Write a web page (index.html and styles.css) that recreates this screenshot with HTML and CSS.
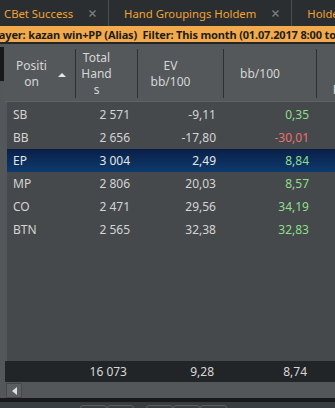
FILE: index.html
```html
<!DOCTYPE html>
<html lang="en">
<head>
    <meta charset="UTF-8">
    <title>Position Stats</title>
    <link rel="stylesheet" href="styles.css">
</head>
<body>

    <div class="tabs">
        <div class="tab first">
            <span class="tab-title">CBet Success</span>
            <svg class="tab-close" width="7" height="7" viewBox="0 0 7 7"><path d="M0.5 0.5L6.5 6.5M6.5 0.5L0.5 6.5"/></svg>
        </div>
        <div class="tab">
            <span class="tab-title">Hand Groupings Holdem</span>
            <svg class="tab-close" width="7" height="7" viewBox="0 0 7 7"><path d="M0.5 0.5L6.5 6.5M6.5 0.5L0.5 6.5"/></svg>
        </div>
        <div class="tab">
            <span class="tab-title">Holdem Hands</span>
        </div>
    </div>

    <div class="filter">
        <span class="filter-text">Player: kazan win+PP (Alias)&nbsp; Filter: This month (01.07.2017 8:00 to 01.08.2017 8:00)</span>
    </div>

    <div class="grid">
        <div class="head">
            <div class="hcell sorted"><span class="label">Positi<br>on</span><span class="arrow"></span></div>
            <div class="hcell"><span class="label">Total<br>Hand<br>s</span></div>
            <div class="hcell"><span class="label">EV<br>bb/100</span></div>
            <div class="hcell"><span class="label">bb/100</span></div>
            <div class="hcell wide"><span class="label">All<br>Preflop</span></div>
        </div>

        <div class="rows">
            <div class="row"><span>SB</span><span class="num">2&nbsp;571</span><span class="num">-9,11</span><span class="num pos">0,35</span></div>
            <div class="row"><span>BB</span><span class="num">2&nbsp;656</span><span class="num">-17,80</span><span class="num neg">-30,01</span></div>
            <div class="row selected"><span>EP</span><span class="num">3&nbsp;004</span><span class="num">2,49</span><span class="num pos">8,84</span></div>
            <div class="row"><span>MP</span><span class="num">2&nbsp;806</span><span class="num">20,03</span><span class="num pos">8,57</span></div>
            <div class="row"><span>CO</span><span class="num">2&nbsp;471</span><span class="num">29,56</span><span class="num pos">34,19</span></div>
            <div class="row"><span>BTN</span><span class="num">2&nbsp;565</span><span class="num">32,38</span><span class="num pos">32,83</span></div>
        </div>

        <div class="totals">
            <span></span><span class="num">16&nbsp;073</span><span class="num">9,28</span><span class="num">8,74</span>
        </div>

        <div class="scrollbar">
            <div class="scroll-btn"><span class="scroll-arrow"></span></div>
        </div>
    </div>

    <div class="bottom">
        <div class="bottom-buttons">
            <span class="bbtn"></span><span class="bbtn"></span>
        </div>
        <div class="bottom-buttons">
            <span class="bbtn"></span><span class="bbtn"></span><span class="bbtn"></span>
        </div>
    </div>

</body>
</html>
```

FILE: styles.css
```css
body {
    margin: 0;
    width: 335px;
    height: 408px;
    overflow: hidden;
    background: #3a3d40;
    font-family: "Noto Sans", "Open Sans", sans-serif;
    font-size: 12px;
    color: #d4d4d4;
}
.tabs {
    display: flex;
    height: 26px;
    background: #2b2e31;
    white-space: nowrap;
}
.tab {
    display: flex;
    align-items: center;
    gap: 16px;
    padding: 0 12px 0 15px;
    border-right: 1px solid #4a4d51;
    flex-shrink: 0;
}
.tab.first {
    padding-left: 4px;
}
.tab-title {
    color: #f0a234;
    font-size: 11.3px;
}
.tab-close {
    stroke: #7a7d80;
    stroke-width: 1.4;
}
.filter {
    height: 16px;
    background: #f3aa4c;
    border-bottom: 2px solid #232527;
    overflow: hidden;
    white-space: nowrap;
}
.filter-text {
    display: inline-block;
    margin-left: -11px;
    font-size: 11px;
    letter-spacing: -0.15px;
    font-weight: bold;
    color: #1d1d1d;
    line-height: 16px;
}
.grid {
    width: 420px;
    padding-left: 5px;
    background: linear-gradient(#17191b, #17191b) 0 3px / 4px 34px no-repeat, #53575a;
}
.head {
    display: grid;
    grid-template-columns: 71px 62px 86px 93px 93px;
    padding: 5px 0 3px;
    height: 49px;
    background: #54585b;
    border-bottom: 1px solid #5e6265;
}
.hcell {
    display: flex;
    align-items: center;
    padding: 0 22px 0 2px;
    border-right: 1px solid #2e3134;
    color: #d6d6d6;
    line-height: 16px;
}
.hcell .label {
    flex: 1;
    text-align: center;
}
.hcell.sorted {
    padding: 0 9px 0 4px;
    gap: 4px;
}
.hcell.wide {
    padding: 16px 22px 0 2px;
}
.arrow {
    width: 0;
    height: 0;
    border-left: 4px solid transparent;
    border-right: 4px solid transparent;
    border-bottom: 4px solid #e6e6e6;
    margin-top: 2px;
}
.rows {
    margin-left: 2px;
    height: 258px;
    padding-top: 1px;
    background: #45494c;
}
.row {
    display: grid;
    grid-template-columns: 69px 62px 86px 93px;
    height: 23px;
    align-items: center;
}
.row span {
    padding: 0 8px 0 6px;
}
.num {
    text-align: right;
}
.pos {
    color: #8fdf8a;
}
.neg {
    color: #ee6f6f;
}
.row.selected {
    background: linear-gradient(#0a1f47, #0d3a6e);
    color: #e6e6e6;
}
.totals {
    display: grid;
    grid-template-columns: 71px 62px 86px 93px;
    height: 21px;
    align-items: center;
    background: #222527;
    color: #d8d8d8;
}
.totals span {
    padding-right: 10px;
}
.totals span:nth-child(2) {
    padding-right: 11px;
}
.scrollbar {
    height: 15px;
    padding: 1px 0 0 1px;
    background: #53575a;
}
.scroll-btn {
    width: 14px;
    height: 13px;
    border: 1px solid #45494c;
    background: #5a5e61;
    display: flex;
    align-items: center;
    justify-content: center;
}
.scroll-arrow {
    width: 0;
    height: 0;
    border-top: 4px solid transparent;
    border-bottom: 4px solid transparent;
    border-right: 5px solid #e0e0e0;
}
.bottom {
    height: 12px;
    border-top: 4px solid #17191b;
    display: flex;
    gap: 12px;
    padding-left: 80px;
}
.bottom-buttons {
    display: flex;
}
.bbtn {
    width: 25px;
    height: 10px;
    margin-top: 3px;
    border: 1px solid #5a5e61;
    border-radius: 3px 3px 0 0;
}
```
